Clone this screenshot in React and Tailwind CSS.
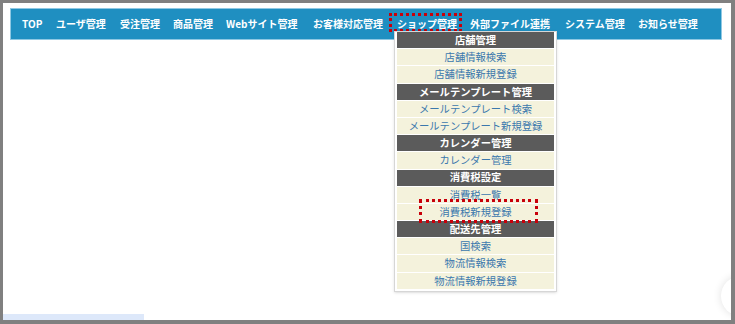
import React from "react";

const navItems = [
  { name: "TOP", w: "w-[34px]" },
  { name: "ユーザ管理", w: "w-[64px]" },
  { name: "受注管理", w: "w-[53px]" },
  { name: "商品管理", w: "w-[53px]" },
  { name: "Webサイト管理", w: "w-[87px]" },
  { name: "お客様対応管理", w: "w-[84px]" },
  { name: "ショップ管理", w: "w-[73px]", active: true },
  { name: "外部ファイル連携", w: "w-[95px]" },
  { name: "システム管理", w: "w-[73px]" },
  { name: "お知らせ管理", w: "w-[62px]" },
];

const menu = [
  { label: "店舗管理", head: true },
  { label: "店舗情報検索" },
  { label: "店舗情報新規登録" },
  { label: "メールテンプレート管理", head: true },
  { label: "メールテンプレート検索" },
  { label: "メールテンプレート新規登録" },
  { label: "カレンダー管理", head: true },
  { label: "カレンダー管理" },
  { label: "消費税設定", head: true },
  { label: "消費税一覧" },
  { label: "消費税新規登録", marked: true },
  { label: "配送先管理", head: true },
  { label: "国検索" },
  { label: "物流情報検索" },
  { label: "物流情報新規登録" },
];

function Dropdown() {
  return (
    <div className="absolute left-[-3px] top-[22px] z-10 w-[163px] bg-white border border-[#d6d6d6] px-[2px] pb-[2px] shadow-sm">
      <div className="flex flex-col gap-px">
        {menu.map((item, i) =>
          item.head ? (
            <div
              key={i}
              className="h-[16.2px] flex items-center justify-center bg-[#5b5b5b] text-white font-bold text-[10.3px] leading-none"
            >
              {item.label}
            </div>
          ) : (
            <div
              key={i}
              className="relative h-[16.2px] flex items-center justify-center bg-[#f4f2dc] text-[#3b78ad] text-[10.3px] leading-none"
            >
              {item.label}
              {item.marked && (
                <span className="absolute left-[22px] right-[16px] top-[-5px] bottom-[-3px] border-[3px] border-dotted border-[#c8000a]" />
              )}
            </div>
          )
        )}
      </div>
    </div>
  );
}

export default function App() {
  return (
    <div
      className="relative w-[735px] h-[324px] bg-white border-l-[3px] border-t-[3px] border-r-[4px] border-b-[4px] border-[#808080] overflow-hidden"
      style={{ fontFamily: '"Noto Sans CJK JP", "Noto Sans", sans-serif' }}
    >
      <div className="flex flex-col h-full pl-[7px] pr-[9px] pt-[5px]">
        {/* global nav */}
        <nav className="h-[32px] flex items-center bg-[#1f8fc1] border border-[#8fc8e3] pl-[11px]">
          {navItems.map((item, i) => (
            <div
              key={i}
              className={`relative ${item.w} h-full flex items-center shrink-0`}
            >
              <span className="text-white font-bold text-[10px] leading-none whitespace-nowrap">
                {item.name}
              </span>
              {item.active && (
                <>
                  <span className="absolute left-[-8px] w-[73px] top-[4px] h-[19px] border-[3px] border-dotted border-[#c8000a]" />
                  <Dropdown />
                </>
              )}
            </div>
          ))}
        </nav>
        <div className="flex-1" />
        <div className="-ml-[7px] w-[141px] h-[6px] bg-[#dde8fa]" />
      </div>
      <div className="absolute right-[-30px] bottom-[4px] w-[40px] h-[40px] rounded-full bg-white shadow-[0_0_8px_rgba(0,0,0,0.12)]" />
    </div>
  );
}
